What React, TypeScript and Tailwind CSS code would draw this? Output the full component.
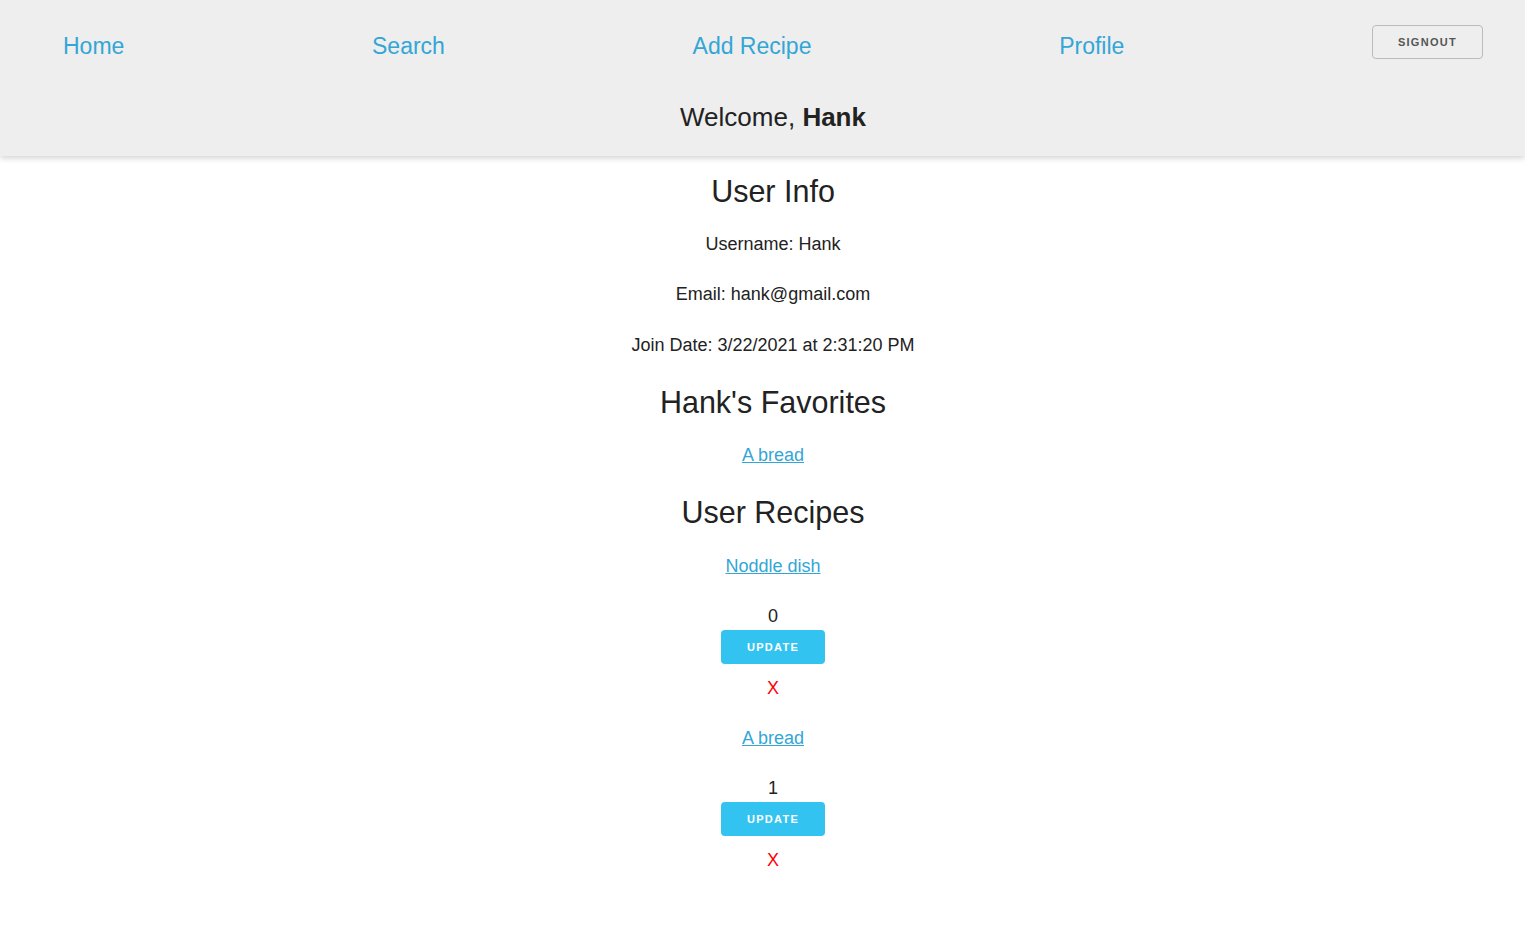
import React from "react";

const font = { fontFamily: '"Liberation Sans", Arial, sans-serif' };

function Recipe({ name, count }: { name: string; count: number }) {
  return (
    <div className="flex flex-col items-center">
      <a href="#" className="mt-[26px] text-[18px] leading-[24px] text-[#33a6d6] underline">
        {name}
      </a>
      <p className="mt-[26px] text-[18px] leading-[24px]">{count}</p>
      <button className="mt-[2px] h-[34px] w-[104px] rounded-[4px] bg-[#33c3f0] text-[11px] font-bold uppercase tracking-[1.3px] text-white">
        Update
      </button>
      <p className="mt-[12px] text-[18px] leading-[24px] text-[#ff0000]">X</p>
    </div>
  );
}

export default function App() {
  return (
    <div style={font} className="min-h-[927px] bg-white text-[#222]">
      <header className="h-[156px] bg-[#eeeeee] shadow-[0_2px_6px_rgba(0,0,0,0.18)] relative z-10">
        <nav className="flex items-start justify-between pl-[63px] pr-[42px] pt-[25px]">
          <a href="#" className="mt-[4px] text-[23px] leading-[34px] text-[#33a6d6]">Home</a>
          <a href="#" className="mt-[4px] text-[23px] leading-[34px] text-[#33a6d6]">Search</a>
          <a href="#" className="mt-[4px] text-[23px] leading-[34px] text-[#33a6d6]">Add Recipe</a>
          <a href="#" className="mt-[4px] text-[23px] leading-[34px] text-[#33a6d6]">Profile</a>
          <button className="h-[34px] w-[111px] rounded-[4px] border border-[#bbbbbb] pt-[1px] text-[11px] font-bold uppercase tracking-[1.3px] text-[#555]">
            Signout
          </button>
        </nav>
        <div className="mt-[37px] pl-[21px] text-center text-[26px] leading-[34px]">
          Welcome, <b>Hank</b>
        </div>
      </header>
      <main className="flex flex-col items-center pl-[21px] pb-[40px]">
        <h2 className="mt-[15px] text-[30.5px] leading-[40px]">User Info</h2>
        <p className="mt-[21px] text-[18px] leading-[24px]">Username: Hank</p>
        <p className="mt-[26px] text-[18px] leading-[24px]">Email: hank@gmail.com</p>
        <p className="mt-[27px] text-[18px] leading-[24px]">Join Date: 3/22/2021 at 2:31:20 PM</p>
        <h2 className="mt-[25px] text-[30.5px] leading-[40px]">Hank's Favorites</h2>
        <a href="#" className="mt-[21px] text-[18px] leading-[24px] text-[#33a6d6] underline">A bread</a>
        <h2 className="mt-[25px] text-[30.5px] leading-[40px]">User Recipes</h2>
        <div className="-mt-[4px] flex flex-col items-center">
          <Recipe name="Noddle dish" count={0} />
          <Recipe name="A bread" count={1} />
        </div>
      </main>
    </div>
  );
}
